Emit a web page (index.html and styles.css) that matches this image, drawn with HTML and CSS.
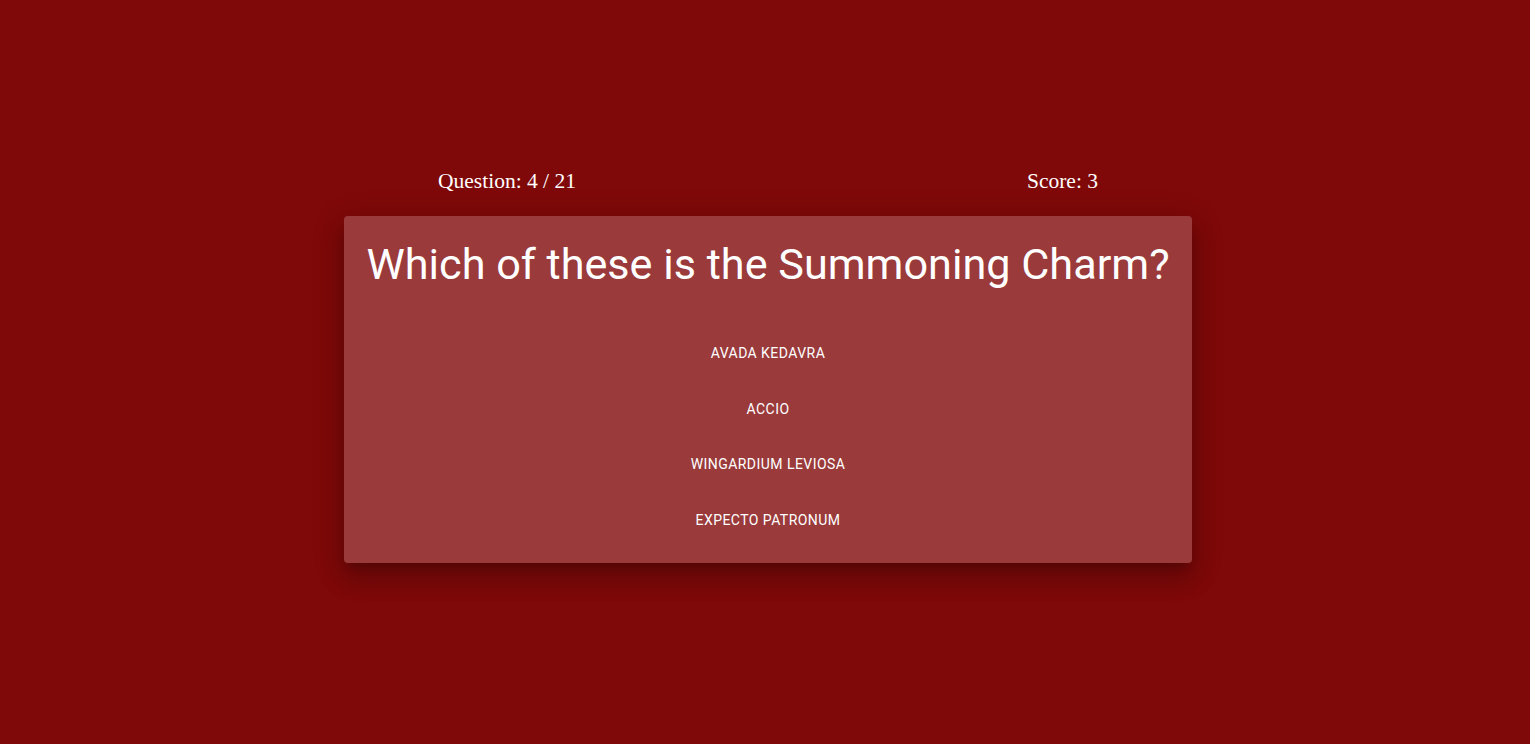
FILE: index.html
```html
<!DOCTYPE html>
<html lang="en">
<head>
<meta charset="utf-8">
<title>Quiz</title>
<link rel="stylesheet" href="styles.css">
</head>
<body>
<main class="quiz">
  <div class="status">
    <span class="status-item">Question: 4 / 21</span>
    <span class="status-item">Score: 3</span>
  </div>
  <section class="card">
    <h1 class="question">Which of these is the Summoning Charm?</h1>
    <div class="answers">
      <button class="answer" type="button">Avada Kedavra</button>
      <button class="answer" type="button">Accio</button>
      <button class="answer" type="button">Wingardium Leviosa</button>
      <button class="answer" type="button">Expecto Patronum</button>
    </div>
  </section>
</main>
</body>
</html>
```
FILE: styles.css
```css
html, body {
  margin: 0;
  padding: 0;
}
body {
  background: #7f0909;
  color: #fff;
  font-family: "Liberation Serif", "Times New Roman", serif;
  min-height: 100vh;
  padding-left: 6px;
  box-sizing: border-box;
}
.quiz {
  width: 848px;
  margin: 0 auto;
  padding-top: 169px;
  display: flex;
  flex-direction: column;
  align-items: center;
}
.status {
  width: 660px;
  display: flex;
  justify-content: space-between;
  font-size: 21.5px;
  line-height: 25px;
  margin-bottom: 22px;
}
.card {
  width: 848px;
  box-sizing: border-box;
  background: #9a3a3b;
  border-radius: 4px;
  box-shadow: 0 8px 10px -5px rgba(0,0,0,.2), 0 16px 24px 2px rgba(0,0,0,.14), 0 6px 30px 5px rgba(0,0,0,.12);
  padding: 24px 0 25px;
  display: flex;
  flex-direction: column;
  align-items: center;
  font-family: Roboto, "Liberation Sans", sans-serif;
}
.question {
  margin: 0 0 45px;
  font-family: Roboto, "Liberation Sans", sans-serif;
  font-weight: 400;
  font-size: 43.2px;
  line-height: 50px;
  text-align: center;
}
.answers {
  display: flex;
  flex-direction: column;
  align-items: center;
  gap: 19.7px;
}
.answer {
  background: transparent;
  border: 0;
  color: #fff;
  font-family: Roboto, "Liberation Sans", sans-serif;
  font-weight: 400;
  font-size: 14px;
  letter-spacing: 0.45px;
  text-transform: uppercase;
  height: 36px;
  padding: 0 16px;
  min-width: 64px;
  border-radius: 4px;
  cursor: pointer;
}
```
